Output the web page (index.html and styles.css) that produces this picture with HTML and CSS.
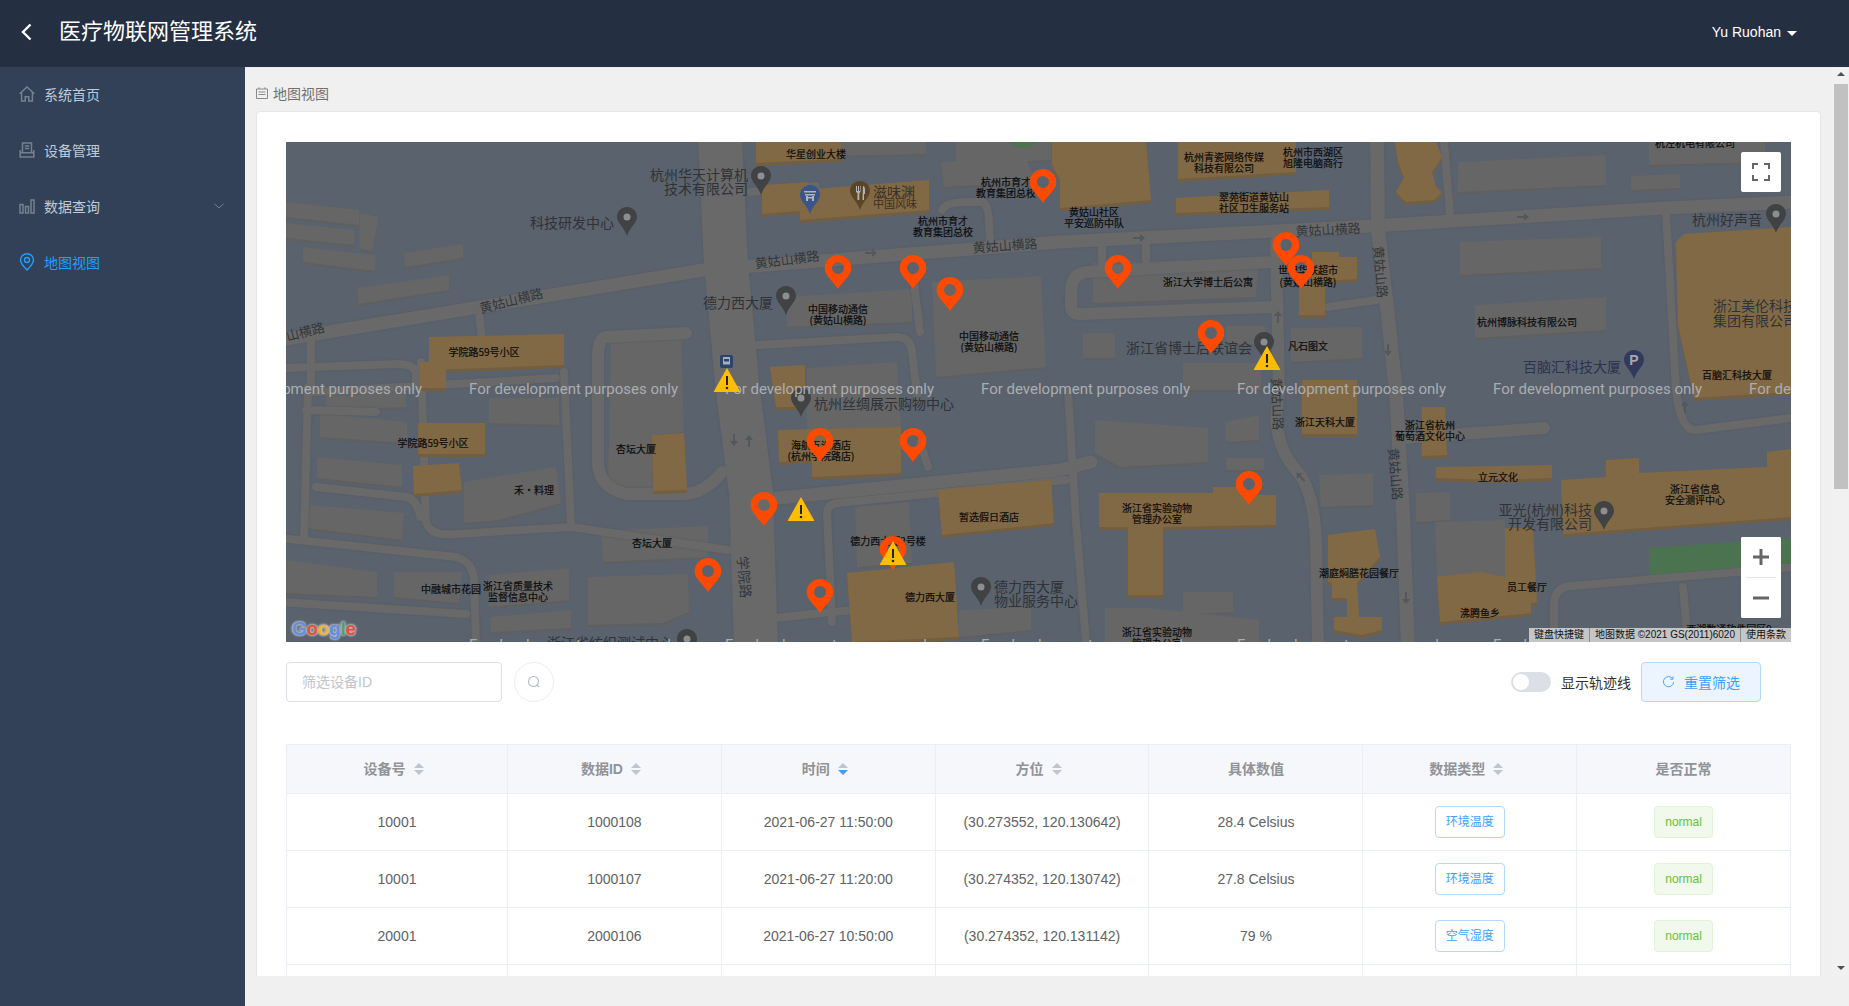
FILE: index.html
```html
<!DOCTYPE html>
<html lang="zh-CN">
<head>
<meta charset="utf-8">
<title>医疗物联网管理系统</title>
<link rel="stylesheet" href="styles.css">
</head>
<body>
<header class="topbar">
  <svg class="back" viewBox="0 0 12 18"><path d="M10.5 1.5 3 9l7.5 7.5"/></svg>
  <div class="title">医疗物联网管理系统</div>
  <div class="user">Yu Ruohan<i class="caret"></i></div>
</header>
<div class="frame">
  <nav class="side">
    <a class="item">
      <svg class="ico" viewBox="0 0 16 16"><path d="M.7 7.800 8 1l7.300 6.800M2.600 6.200V15h3.600v-4.200h3.600V15h3.600V6.200"/></svg>系统首页
    </a>
    <a class="item">
      <svg class="ico" viewBox="0 0 16 16"><path d="M3.500 10V1h9v9M5.800 4h4.400M5.800 6.600h4.400M1.200 8v7h13.600V8M1.200 10.800h13.600"/></svg>设备管理
    </a>
    <a class="item">
      <svg class="ico" viewBox="0 0 16 16"><path d="M1 6.500h3V15H1zM6.500 8.500h3V15h-3zM12 2h3v13h-3z"/></svg>数据查询
      <svg class="chev" viewBox="0 0 10 6"><path d="M.5.8 5 5l4.500-4.200"/></svg>
    </a>
    <a class="item active">
      <svg class="ico" viewBox="0 0 16 18"><path d="M8 17C4 13 1.500 10.300 1.500 7a6.500 6.200 0 0 1 13 0c0 3.300-2.500 6-6.500 10Z"/><circle cx="8" cy="7" r="2.500"/></svg>地图视图
    </a>
  </nav>
  <main class="main">
    <div class="viewport">
    <div class="scroller">
      <div class="crumb">
        <svg class="crumb-ico" viewBox="0 0 12 12"><path d="M.5 2h11v9.500H.5zM3 .3V2M9 .3V2M2.500 5h7M2.500 7.500h7"/></svg>地图视图
      </div>
      <section class="card">
        <div class="map">
          <svg class="map-svg" viewBox="0 0 1505 500" width="1505" height="500">
            <defs>
              <symbol id="pin" viewBox="0 0 27 34"><path class="pin-red" fill-rule="evenodd" d="M13.500 0A13.500 13.500 0 0 1 27 13.300C27 20 18 27 13.500 34 9 27 0 20 0 13.300A13.500 13.500 0 0 1 13.500 0Zm0 7a6 6 0 1 1 0 12 6 6 0 1 1 0-12Z"/></symbol>
              <symbol id="warn" viewBox="0 0 27 24"><path class="warn-tri" d="M13.500 0 27 24H0Z"/><rect class="warn-mark" x="12.500" y="8" width="2" height="9"/><circle class="warn-mark" cx="13.500" cy="20" r="1.300"/></symbol>
              <symbol id="poi" viewBox="0 0 20 29"><path class="poi-dark" d="M10 0C4.500 0 0 4.300 0 9.800 0 16 7 20 10 29c3-9 10-13 10-19.200C20 4.300 15.500 0 10 0Z"/><circle class="poi-dot" cx="10" cy="10" r="3.500"/></symbol>
              <symbol id="arrow" viewBox="0 0 12 8"><path class="arrow" d="M0 3h7V0l5 4-5 4V5H0Z"/></symbol>
            </defs>
            <rect class="ground" width="1505" height="500"/>
            <g class="bldg-grey">
              <polygon points="0,60 73,68 73,83 0,75"/><polygon points="0,81 69,88 68,103 0,96"/><polygon points="17,105 90,113 89,129 17,120"/><polygon points="74,71 93,75 86,110 73,106"/><polygon points="118,111 177,102 177,116 119,125"/><polygon points="72,146 163,133 163,148 72,162"/>
              <polygon points="501,155 626,147 626,180 501,185"/><polygon points="646,140 755,134 760,225 650,235"/><polygon points="325,196 395,191 398,290 366,293 366,349 322,345"/><polygon points="521,226 611,220 615,285 521,288"/>
              <polygon points="1172,20 1320,13 1320,43 1172,50"/><polygon points="1363,0 1479,0 1479,20 1363,23"/><polygon points="1174,100 1315,95 1315,126 1174,133"/><polygon points="1189,163 1320,155 1320,188 1189,196"/><polygon points="1005,186 1076,185 1076,216 1005,220"/><polygon points="797,191 829,191 829,216 797,216"/><polygon points="807,121 973,116 970,155 807,161"/><polygon points="940,184 979,184 979,202 940,202"/><polygon points="897,221 975,221 975,248 897,248"/><polygon points="1345,34 1394,32 1394,46 1345,48"/><polygon points="670,0 765,0 765,18 670,22"/><polygon points="545,0 640,0 640,12 545,14"/><polygon points="655,20 740,14 748,40 658,45"/>
              <polygon points="809,278 922,286 922,320 834,325 809,311"/><polygon points="939,280 973,273 973,298 940,300"/><polygon points="1033,333 1087,331 1087,363 1035,365"/><polygon points="1130,351 1164,350 1164,378 1130,380"/><polygon points="1149,380 1219,378 1219,435 1151,438"/><polygon points="897,450 947,450 947,470 897,472"/><polygon points="819,466 865,466 973,478 973,500 819,500"/><polygon points="940,316 978,316 978,328 940,328"/>
              <polygon points="34,271 121,280 121,301 34,295"/><polygon points="203,256 273,256 273,283 203,281"/><polygon points="31,315 116,323 116,345 31,336"/><polygon points="24,363 118,371 116,398 21,386"/><polygon points="178,340 270,325 275,361 213,378 178,381"/><polygon points="315,389 422,384 422,415 317,420"/><polygon points="203,433 283,426 283,458 203,465"/><polygon points="302,435 402,432 403,470 377,481 302,483"/><polygon points="205,475 285,468 285,486 205,490"/><polygon points="0,418 91,430 91,455 0,451"/><polygon points="108,430 176,430 173,461 108,455"/><polygon points="569,365 623,360 626,421 571,425"/><polygon points="673,468 745,465 745,488 673,495"/><polygon points="40,250 120,245 120,265 40,268"/>
            </g>
            <g class="roads">
              <path class="r13" d="M-6 198 417 128 774 100 1086 84 1378 66 1510 60"/>
              <path class="r44" d="M434-5 440 122 452 250 465 350 470 505"/>
              <path class="r14" d="M1091-5 1092 88 1101 165 1110 250 1117 371 1122 505"/>
              <path class="r12" d="M990 100 993 248 990 275Q992 310 1012 330 1028 350 1030 400L1032 505"/>
              <path class="r12" d="M985 120 800 130Q785 132 785 150V165Q785 172 795 172L985 165"/>
              <path class="r8" d="M860 98V118M816 100V122M1042 165 1090 158"/>
              <path class="r8" d="M193 170 196 200M25 190V250M0 226 110 222Q130 222 130 232V240M30 250 270 236"/>
              <path class="r12" d="M400 191 320 195Q312 196 312 215V320Q312 345 340 352H400Q420 350 436 330"/>
              <path class="r8" d="M278 230 285 385 442 408M135 220 140 380Q145 395 170 392L285 385M-6 396 170 415Q188 420 188 440L190 500M22 245 18 398M20 268 90 270M30 345 120 355Q132 358 134 375M-6 460 180 472"/>
              <path class="r13" d="M472 358 774 328 805 320"/>
              <path class="r8" d="M546 480 541 372Q541 362 552 361L780 338"/>
              <path class="r8" d="M628 140 634 190M634 300 642 325M472 203 610 195Q625 195 626 210L632 260M656 68Q660 60 680 60H695Q702 60 703 80L704 100"/>
              <path class="r8" d="M1158 0 1164 72M1380 70 1390 248Q1395 290 1410 288L1505 276"/>
              <path class="r12" d="M1120 296 1258 286"/>
              <path class="r8" d="M1268 500V460Q1270 445 1285 444L1510 425M1397 445 1402 500M470 478 546 470 568 468M465 50 530 44M782 250 790 380 800 500"/>
            </g>
            <g class="bldg-orange">
              <polygon points="470,0 555,0 555,17 470,21"/><polygon points="476,43 522,40 522,68 476,72"/><polygon points="514,48 643,38 643,68 514,78"/><polygon points="143,195 278,192 278,223 143,228"/><polygon points="134,220 160,220 160,246 134,246"/><polygon points="484,225 519,223 519,265 490,265"/>
              <polygon points="766,0 860,0 865,58 774,66 774,38 766,22"/><polygon points="892,0 1010,0 1010,30 892,37"/><polygon points="890,56 1043,48 1043,65 890,71"/><polygon points="1109,0 1150,0 1156,15 1146,30 1150,45 1156,50 1148,58 1120,60 1110,50 1118,35 1112,20"/>
              <polygon points="1026,110 1053,110 1053,115 1071,115 1071,137 1039,139 1039,173 1013,173 1013,145 1026,140"/><polygon points="1398,92 1505,85 1505,250 1408,256 1392,182 1390,100"/><polygon points="1016,238 1071,238 1071,292 1016,292"/>
              <polygon points="1136,265 1159,265 1161,313 1136,314"/><polygon points="1150,325 1266,323 1266,336 1210,338 1150,336"/><polygon points="1275,338 1320,335 1320,318 1353,316 1353,331 1481,325 1481,310 1505,307 1505,375 1277,392"/>
              <polygon points="813,351 927,351 927,345 960,345 960,353 990,353 990,383 877,385 877,453 842,453 842,385 813,385"/>
              <polygon points="1042,393 1089,387 1094,415 1071,441 1073,475 1096,475 1096,488 1076,493 1048,488 1048,475 1061,475 1061,456 1046,456 1046,441 1042,440"/>
              <polygon points="1219,386 1247,386 1251,460 1245,461 1245,471 1154,480 1151,435 1194,430 1219,435"/>
              <polygon points="132,281 199,281 199,312 132,312"/><polygon points="127,324 173,321 176,348 128,352"/><polygon points="366,293 398,291 401,348 367,349"/><polygon points="492,288 615,285 615,331 526,335 526,318 493,320"/><polygon points="652,348 765,338 768,381 656,393"/><polygon points="561,431 668,420 673,495 566,500"/>
            </g>
            <polygon class="park" points="1363,406 1505,396 1505,421 1363,433"/>
            <circle class="park" cx="737" cy="-12" r="18"/>
            <use href="#arrow" x="579" y="107" width="12" height="8"/>
            <use href="#arrow" x="847" y="92" width="12" height="8"/>
            <use href="#arrow" x="1231" y="71" width="12" height="8"/>
            <use href="#arrow" width="12" height="8" transform="translate(988 181) rotate(-90)"/>
            <use href="#arrow" width="12" height="8" transform="translate(1106 202) rotate(90)"/>
            <use href="#arrow" width="12" height="8" transform="translate(452 292) rotate(90)"/>
            <use href="#arrow" width="12" height="8" transform="translate(459 305) rotate(-90)"/>
            <use href="#arrow" width="12" height="8" transform="translate(1124 450) rotate(90)"/>
            <use href="#arrow" width="12" height="8" transform="translate(1395 271) rotate(-90)"/>
            <use href="#arrow" width="12" height="8" transform="translate(1016 342) rotate(-135)"/>

            <g class="road-t">
              <text transform="translate(225 158) rotate(-14)">黄姑山横路</text>
              <text transform="translate(501 117) rotate(-7)">黄姑山横路</text>
              <text transform="translate(719 103) rotate(-4)">黄姑山横路</text>
              <text transform="translate(19 189) rotate(-14)">山横路</text>
              <text transform="translate(1042 87) rotate(-3)">黄姑山横路</text>
              <text transform="translate(1095 130) rotate(85)">黄姑山路</text>
              <text transform="translate(1110 332) rotate(85)">黄姑山路</text>
              <text transform="translate(992 262) rotate(88)">黄姑山路</text>
              <text class="road-b" transform="translate(459 435) rotate(85)">学院路</text>
            </g>
            <g class="lbl">
              <text x="530" y="11">华星创业大楼</text>
              <text x="720" y="39">杭州市育才</text><text x="720" y="50">教育集团总校</text>
              <text x="657" y="78">杭州市育才</text><text x="657" y="89">教育集团总校</text>
              <text x="552" y="166">中国移动通信</text><text x="552" y="177">(黄姑山横路)</text>
              <text x="703" y="193">中国移动通信</text><text x="703" y="204">(黄姑山横路)</text>
              <text x="198" y="209">学院路59号小区</text>
              <text x="938" y="14">杭州青瓷网络传媒</text><text x="938" y="25">科技有限公司</text>
              <text x="1027" y="9">杭州市西湖区</text><text x="1027" y="20">旭隆电脑商行</text>
              <text x="968" y="54">翠苑街道黄姑山</text><text x="968" y="65">社区卫生服务站</text>
              <text x="808" y="69">黄姑山社区</text><text x="808" y="80">平安巡防中队</text>
              <text x="1022" y="127">世纪华联超市</text><text x="1022" y="139">(黄姑山横路)</text>
              <text x="922" y="139">浙江大学博士后公寓</text>
              <text x="1241" y="179">杭州博脉科技有限公司</text>
              <text x="1409" y="0">杭泾机电有限公司</text>
              <text x="1022" y="203">凡石图文</text>
              <text x="1451" y="232">百脑汇科技大厦</text>
              <text x="147" y="300">学院路59号小区</text>
              <text x="350" y="306">杏坛大厦</text>
              <text x="535" y="302">海航五洲酒店</text><text x="535" y="313">(杭州学院路店)</text>
              <text x="248" y="347">禾·料理</text>
              <text x="366" y="400">杏坛大厦</text>
              <text x="703" y="374">暂选假日酒店</text>
              <text x="602" y="398">德力西大厦2号楼</text>
              <text x="165" y="446">中融城市花园</text>
              <text x="232" y="443">浙江省质量技术</text><text x="232" y="454">监督信息中心</text>
              <text x="644" y="454">德力西大厦</text>
              <text x="1039" y="279">浙江天科大厦</text>
              <text x="1144" y="282">浙江省杭州</text><text x="1144" y="293">葡萄酒文化中心</text>
              <text x="1212" y="334">立元文化</text>
              <text x="1409" y="346">浙江省信息</text><text x="1409" y="357">安全测评中心</text>
              <text x="871" y="365">浙江省实验动物</text><text x="871" y="376">管理办公室</text>
              <text x="1073" y="430">潮庭焖膳花园餐厅</text>
              <text x="1241" y="444">员工餐厅</text>
              <text x="1194" y="470">沸腾鱼乡</text>
              <text x="871" y="489">浙江省实验动物</text><text x="871" y="500">管理办公室</text>
              <text x="1443" y="486">西湖数通软件园区9</text>
            </g>
            <g class="poi-t">
              <text x="286" y="80" class="mid">科技研发中心</text>
              <text x="462" y="32" class="end">杭州华天计算机</text><text x="462" y="46" class="end">技术有限公司</text>
              <text x="487" y="160" class="end">德力西大厦</text>
              <text x="587" y="49" class="brown">滋味渊</text><text x="587" y="61" class="brown small">中国风味</text>
              <text x="1476" y="77" class="end">杭州好声音</text>
              <text x="966" y="205" class="end">浙江省博士后联谊会</text>
              <text x="1335" y="224" class="end indigo">百脑汇科技大厦</text>
              <text x="1427" y="163">浙江美伦科技</text><text x="1427" y="178">集团有限公司</text>
              <text x="528" y="261">杭州丝绸展示购物中心</text>
              <text x="708" y="444">德力西大厦</text><text x="708" y="458">物业服务中心</text>
              <text x="1306" y="367" class="end">亚光(杭州)科技</text><text x="1306" y="381" class="end">开发有限公司</text>
              <text x="387" y="500" class="end">浙江省纺织测试中心</text>
            </g>
            <use href="#poi" x="465" y="24" width="20" height="29"/>
            <use href="#poi" x="331" y="65" width="20" height="29"/>
            <use href="#poi" x="490" y="144" width="20" height="29"/>
            <use href="#poi" x="968" y="190" width="20" height="29"/>
            <use href="#poi" x="1480" y="62" width="20" height="29"/>
            <use href="#poi" x="505" y="246" width="20" height="29"/>
            <use href="#poi" x="685" y="435" width="20" height="29"/>
            <use href="#poi" x="391" y="487" width="20" height="29"/>
            <use href="#poi" x="1308" y="359" width="20" height="29"/>
            <path class="poi-blue" d="M524 43c-5.500 0-10 4.300-10 9.800 0 6.200 7 10.200 10 19.200 3-9 10-13 10-19.200 0-5.500-4.500-9.800-10-9.800Z"/>
            <path class="poi-glyph" d="M518 49h12v1.500h-12zM519 52h10v1.500h-10zM520 54h2v5h-2zM526 54h2v5h-2zM522 55h4v1.500h-4z"/>
            <path class="poi-brown" d="M574 39c-5.500 0-10 4.300-10 9.800 0 6.200 7 10.200 10 19.200 3-9 10-13 10-19.200 0-5.500-4.500-9.800-10-9.800Z"/>
            <path class="poi-glyph" d="M570 44h1v5h1v-5h1v5h1v-5h.6v6l-1.300 1v7h-1.800v-7l-1.500-1zM577 44c1.500 0 2 2 2 4v4h-1v6h-1.500z"/>
            <path class="poi-indigo" d="M1348 208c-5.500 0-10 4.300-10 9.800 0 6.200 7 10.200 10 19.200 3-9 10-13 10-19.200 0-5.500-4.500-9.800-10-9.800Z"/>
            <text x="1348" y="218" class="poi-p">P</text>
            <rect class="bus" x="434" y="213" width="13" height="13" rx="2"/>
            <path class="bus-glyph" d="M437 215h7v7.500h-7zM438 217h5v2.500h-5z"/>
            <g class="dev">
              <text x="-73" y="247">For development purposes only</text>
              <text x="183" y="247">For development purposes only</text>
              <text x="439" y="247">For development purposes only</text>
              <text x="695" y="247">For development purposes only</text>
              <text x="951" y="247">For development purposes only</text>
              <text x="1207" y="247">For development purposes only</text>
              <text x="1463" y="247">For development purposes only</text>
              <text x="183" y="503">For development purposes only</text>
              <text x="439" y="503">For development purposes only</text>
              <text x="695" y="503">For development purposes only</text>
              <text x="951" y="503">For development purposes only</text>
              <text x="1207" y="503">For development purposes only</text>
              <text x="1463" y="503">For development purposes only</text>
            </g>
            <use href="#pin" x="538.500" y="113" width="27" height="34"/>
            <use href="#pin" x="613.500" y="113" width="27" height="34"/>
            <use href="#pin" x="650.500" y="135" width="27" height="34"/>
            <use href="#pin" x="743.500" y="27" width="27" height="34"/>
            <use href="#pin" x="818.500" y="113" width="27" height="34"/>
            <use href="#pin" x="986.500" y="90" width="27" height="34"/>
            <use href="#pin" x="1001.500" y="113" width="27" height="34"/>
            <use href="#pin" x="911.500" y="178" width="27" height="34"/>
            <use href="#pin" x="520.500" y="286" width="27" height="34"/>
            <use href="#pin" x="613.500" y="286" width="27" height="34"/>
            <use href="#pin" x="464.500" y="350" width="27" height="34"/>
            <use href="#pin" x="408.500" y="416" width="27" height="34"/>
            <use href="#pin" x="520.500" y="437" width="27" height="34"/>
            <use href="#pin" x="593.500" y="394" width="27" height="34"/>
            <use href="#pin" x="949.500" y="329" width="27" height="34"/>
            <use href="#warn" x="427.500" y="226" width="27" height="24"/>
            <use href="#warn" x="967.500" y="204" width="27" height="24"/>
            <use href="#warn" x="501.500" y="355" width="27" height="24"/>
            <use href="#warn" x="593.500" y="399" width="27" height="24"/>
          </svg>
          <div class="logo"><span class="g-b">G</span><span class="g-r">o</span><span class="g-y">o</span><span class="g-b">g</span><span class="g-g">l</span><span class="g-r">e</span></div>
          <button class="ctl ctl-full">
            <svg viewBox="0 0 18 18"><path d="M1 6V1h5M12 1h5v5M17 12v5h-5M6 17H1v-5"/></svg>
          </button>
          <div class="ctl-zoom">
            <button class="ctl ctl-half"><svg viewBox="0 0 18 18"><path d="M9 1v16M1 9h16"/></svg></button>
            <span class="ctl-sep"></span>
            <button class="ctl ctl-half"><svg viewBox="0 0 18 18"><path d="M1 9h16"/></svg></button>
          </div>
          <div class="attr"><span>键盘快捷键</span><span>地图数据 ©2021 GS(2011)6020</span><span>使用条款</span></div>
        </div>

        <div class="toolbar">
          <div class="filter">
            <input class="input" placeholder="筛选设备ID">
            <button class="circle">
              <svg viewBox="0 0 14 14"><circle cx="6.500" cy="6.500" r="5"/><path d="m10 10 2 2"/></svg>
            </button>
          </div>
          <div class="actions">
            <span class="switch"><i class="knob"></i></span>
            <span class="switch-label">显示轨迹线</span>
            <button class="reset">
              <svg viewBox="0 0 14 14"><path d="M11.500 3.500A5.500 5.500 0 1 0 12.500 7M11.800 1v3h-3"/></svg>重置筛选
            </button>
          </div>
        </div>

        <table class="tbl">
          <thead>
            <tr>
              <th class="first">设备号<span class="sort"><i class="up"></i><i class="down"></i></span></th>
              <th>数据ID<span class="sort"><i class="up"></i><i class="down"></i></span></th>
              <th>时间<span class="sort"><i class="up"></i><i class="down on"></i></span></th>
              <th>方位<span class="sort"><i class="up"></i><i class="down"></i></span></th>
              <th>具体数值</th>
              <th>数据类型<span class="sort"><i class="up"></i><i class="down"></i></span></th>
              <th>是否正常</th>
            </tr>
          </thead>
          <tbody>
            <tr><td>10001</td><td>1000108</td><td>2021-06-27 11:50:00</td><td>(30.273552, 120.130642)</td><td>28.4 Celsius</td><td><span class="tag">环境温度</span></td><td><span class="tag ok">normal</span></td></tr>
            <tr><td>10001</td><td>1000107</td><td>2021-06-27 11:20:00</td><td>(30.274352, 120.130742)</td><td>27.8 Celsius</td><td><span class="tag">环境温度</span></td><td><span class="tag ok">normal</span></td></tr>
            <tr><td>20001</td><td>2000106</td><td>2021-06-27 10:50:00</td><td>(30.274352, 120.131142)</td><td>79 %</td><td><span class="tag">空气湿度</span></td><td><span class="tag ok">normal</span></td></tr>
            <tr><td></td><td></td><td></td><td></td><td></td><td></td><td></td></tr>
          </tbody>
        </table>
      </section>
    </div>
    <div class="rail">
      <i class="rail-up"></i>
      <span class="rail-thumb"></span>
      <i class="rail-down"></i>
    </div>
    </div>
  </main>
</div>
</body>
</html>
```
FILE: styles.css
```css
* { box-sizing: border-box; }
html, body { margin: 0; height: 100%; overflow: hidden; }
body {
  display: flex;
  flex-direction: column;
  font-family: "Liberation Sans", "Noto Sans CJK SC", sans-serif;
  font-size: 14px;
  color: #606266;
  background: #f0f0f0;
}

/* top bar */
.topbar {
  flex: none;
  height: 67px;
  display: flex;
  align-items: center;
  padding: 0 52px 3px 20px;
  background: #242f42;
  color: #fff;
}
.back { width: 12px; height: 18px; margin-right: 27px; fill: none; stroke: #fff; stroke-width: 2.4; }
.title { font-size: 22px; flex: 1; line-height: 30px; }
.user { display: flex; align-items: center; font-size: 14px; }
.caret {
  width: 0; height: 0; margin-left: 6px; margin-top: 2px;
  border: 5px solid transparent; border-top-color: #fff; border-bottom: 0;
}

/* side navigation */
.frame { flex: 1; min-height: 0; display: flex; }
.side { flex: none; width: 245px; background: #324157; }
.item {
  position: relative;
  display: flex;
  align-items: center;
  height: 56px;
  padding: 0 0 2px 19px;
  color: #bfcbd9;
  font-size: 14px;
}
.ico { width: 16px; height: 16px; margin-right: 9px; fill: none; stroke: #76818f; stroke-width: 1.5; }
.chev { width: 10px; height: 6px; position: absolute; left: 214px; top: 24px; fill: none; stroke: #76818f; }
.active { color: #20a0ff; }
.active .ico { stroke: #20a0ff; stroke-width: 1.4; height: 18px; }

/* content */
.main { flex: 1; min-width: 0; display: flex; flex-direction: column; background: #f0f0f0; }
.viewport { flex: 1; min-height: 0; margin-bottom: 30px; display: flex; }
.scroller {
  flex: 1;
  min-width: 0;
  padding: 0 11px;
  overflow: hidden;
}
.rail {
  flex: none;
  width: 17px;
  background: #f1f1f1;
  display: flex;
  flex-direction: column;
  align-items: center;
}
.rail-up, .rail-down { width: 0; height: 0; border: 4px solid transparent; margin-left: 1px; }
.rail-up { margin-top: 5px; border-top: 0; border-bottom-color: #505050; }
.rail-down { margin-top: auto; margin-bottom: 6px; border-bottom: 0; border-top-color: #505050; }
.rail-thumb { width: 14px; height: 405px; margin: 8px 0 0 1px; background: #c1c1c1; }
.crumb {
  height: 34px;
  margin-top: 10px;
  padding-bottom: 2px;
  display: flex;
  align-items: center;
  color: #707070;
  font-size: 14px;
}
.crumb-ico { width: 12px; height: 12px; margin-right: 5px; fill: none; stroke: #8a8a8a; }
.card {
  min-height: 1900px;
  padding: 30px 29px;
  background: #fff;
  border: 1px solid #e6e6e6;
  border-radius: 4px;
}

/* map */
.map { position: relative; height: 500px; overflow: hidden; }
.map-svg { display: block; }
.map-svg text { font-family: "Noto Sans CJK SC", "Liberation Sans", sans-serif; dominant-baseline: central; }
.ground { fill: #5a626e; }
.bldg-grey { fill: #666667; filter: drop-shadow(0 2px 0 #5f5f5f); }
.bldg-orange { fill: #826945; filter: drop-shadow(0 3px 0 #745e40); }
.park { fill: #4c7350; }
.roads { filter: drop-shadow(0 0 1px #555a60); }
.roads path { fill: none; stroke: #69696a; stroke-linecap: round; stroke-linejoin: round; }
.roads .r44 { stroke-width: 44; stroke-linecap: butt; }
.r14 { stroke-width: 14; }
.r13 { stroke-width: 13; }
.r12 { stroke-width: 12; }
.r8 { stroke-width: 8; }
.arrow { fill: #52585e; }
.road-t text { font-size: 13px; fill: #33373c; text-anchor: middle; }
.road-t .road-b { font-size: 14px; }
.lbl text { font-size: 10px; fill: #0c0c0c; text-anchor: middle; stroke: #0c0c0c; stroke-width: .2; }
.poi-t text { font-size: 14px; fill: #2f3237; }
.poi-t .end { text-anchor: end; }
.poi-t .mid { text-anchor: middle; }
.poi-t .brown { fill: #3a3023; }
.poi-t .small { font-size: 11px; }
.poi-t .indigo { fill: #2c3250; }
.poi-dark { fill: #404244; }
.poi-dot { fill: #8c8e90; }
.poi-blue { fill: #39558a; }
.poi-brown { fill: #5b4526; }
.poi-indigo { fill: #31395c; }
.poi-glyph { fill: #b5b5b5; }
.map-svg .poi-p { font-family: "Liberation Sans", sans-serif; font-size: 14px; font-weight: 700; fill: #a5a7ad; text-anchor: middle; }
.bus { fill: #2c4468; }
.bus-glyph { fill: #a8b0bc; fill-rule: evenodd; }
.map-svg .dev text { font-family: "Roboto", "Liberation Sans", sans-serif; font-size: 15px; fill: #abadb1; }
.pin-red { fill: #fe4900; }
.warn-tri { fill: #ffbd00; }
.warn-mark { fill: #222; }

.logo {
  position: absolute;
  left: 6px;
  bottom: 1px;
  font-family: "Liberation Sans", sans-serif;
  font-weight: 700;
  font-size: 19px;
  line-height: 24px;
  letter-spacing: -.3px;
  text-shadow: 0 0 2px #b8b8b8, 0 0 2px #b8b8b8, 0 0 3px #b8b8b8, 0 0 3px #b8b8b8;
}
.g-b { color: #5b8fe8; }
.g-r { color: #e0503f; }
.g-y { color: #ecb92e; }
.g-g { color: #4fa05f; }
.ctl {
  display: flex;
  align-items: center;
  justify-content: center;
  width: 40px;
  height: 40px;
  padding: 0;
  background: #fff;
  border: 0;
  border-radius: 2px;
}
.ctl svg { width: 18px; height: 18px; fill: none; stroke: #666; stroke-width: 3; }
.ctl-full { position: absolute; right: 10px; top: 10px; }
.ctl-full svg { stroke-width: 2; }
.ctl-zoom {
  position: absolute;
  right: 10px;
  top: 395px;
  width: 40px;
  height: 81px;
  background: #fff;
  border-radius: 2px;
  display: flex;
  flex-direction: column;
  align-items: center;
}
.ctl-sep { width: 30px; height: 1px; background: #e6e6e6; flex: none; }
.attr {
  position: absolute;
  right: 0;
  bottom: 0;
  height: 14px;
  display: flex;
  font-size: 10px;
  line-height: 14px;
  color: #111;
  font-family: "Liberation Sans", "Noto Sans CJK SC", sans-serif;
}
.attr span { padding: 0 5px; background: #c4c5c6; border-left: 1px solid #8c8c8c; white-space: nowrap; }
.attr span:first-child { border-left: 0; }

/* toolbar */
.toolbar { display: flex; justify-content: space-between; padding-right: 30px; margin-top: 20px; height: 40px; }
.filter { display: flex; gap: 12px; }
.input {
  width: 216px;
  height: 40px;
  padding: 0 15px;
  border: 1px solid #dcdfe6;
  border-radius: 4px;
  font: 14px "Liberation Sans", "Noto Sans CJK SC", sans-serif;
  outline: none;
}
.input::placeholder { color: #c0c4cc; }
.circle {
  width: 40px;
  height: 40px;
  padding: 0;
  display: flex;
  align-items: center;
  justify-content: center;
  background: #fff;
  border: 1px solid #ebeef5;
  border-radius: 50%;
}
.circle svg { width: 14px; height: 14px; fill: none; stroke: #b5b9c2; stroke-width: 1.1; }
.actions { display: flex; align-items: center; }
.switch { position: relative; width: 40px; height: 20px; border-radius: 10px; background: #dcdfe6; }
.knob { position: absolute; left: 2px; top: 2px; width: 16px; height: 16px; border-radius: 50%; background: #fff; }
.switch-label { margin: 0 10px 0 10px; color: #303133; font-size: 14px; }
.reset {
  display: flex;
  align-items: center;
  justify-content: center;
  width: 120px;
  height: 40px;
  padding: 0;
  background: #ecf5ff;
  border: 1px solid #b3d8ff;
  border-radius: 4px;
  color: #409eff;
  font: 14px "Liberation Sans", "Noto Sans CJK SC", sans-serif;
}
.reset svg { width: 13px; height: 14px; margin-right: 9px; fill: none; stroke: #409eff; stroke-width: 1; }

/* table */
.tbl { width: 1505px; margin-top: 42px; border-collapse: collapse; table-layout: fixed; }
.tbl th, .tbl td { border: 1px solid #ebeef5; text-align: center; padding: 0; }
.tbl th { height: 49px; background: #f5f7fa; color: #909399; font-weight: 700; font-size: 14px; line-height: 20px; }
.tbl .first { width: 221px; }
.tbl td { height: 57px; color: #606266; font-size: 14px; }
.sort { display: inline-flex; flex-direction: column; gap: 2px; height: 12px; margin: 0 7px 2px 8px; vertical-align: middle; }
.sort i { display: block; width: 0; height: 0; border: 5px solid transparent; }
.sort .up { border-top: 0; border-bottom-color: #c0c4cc; }
.sort .down { border-bottom: 0; border-top-color: #c0c4cc; }
.sort .on { border-top-color: #409eff; }
.tag {
  display: inline-block;
  height: 32px;
  padding: 0 10px;
  line-height: 30px;
  font-size: 12px;
  vertical-align: middle;
  color: #409eff;
  background: #fff;
  border: 1px solid #b3d8ff;
  border-radius: 4px;
}
.ok { color: #67c23a; background: #f0f9eb; border-color: #e1f3d8; }
```
